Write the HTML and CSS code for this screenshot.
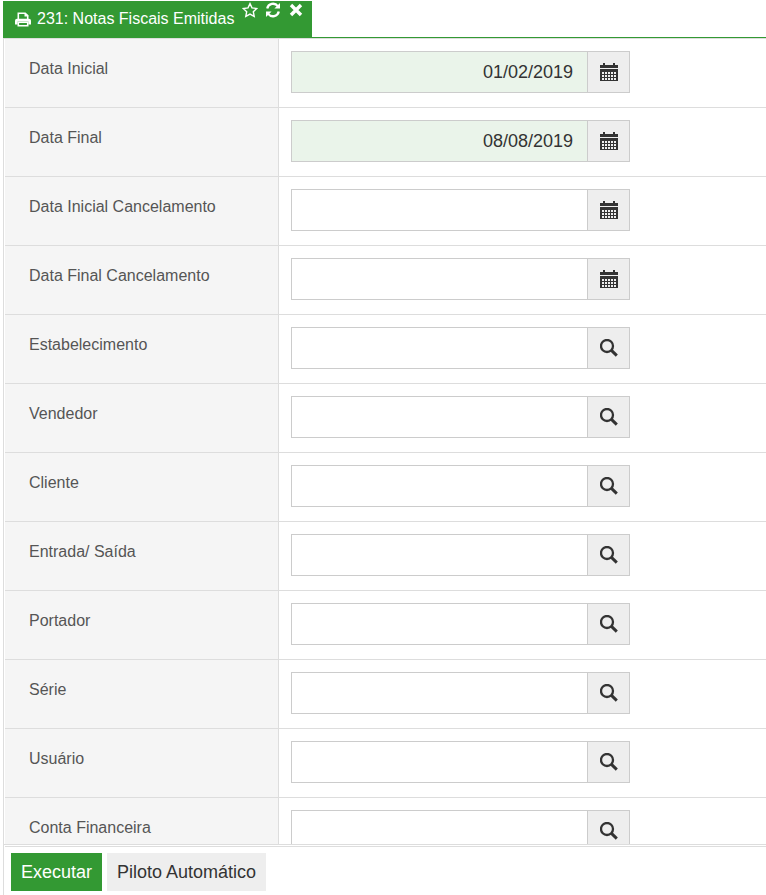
FILE: index.html
```html
<!DOCTYPE html>
<html lang="pt-BR">
<head>
    <meta charset="UTF-8">
    <meta name="viewport" content="width=device-width, initial-scale=1.0">
    <title>231: Notas Fiscais Emitidas</title>
    <link rel="stylesheet" href="styles.css">
</head>
<body>
    <!-- Icons shared by the fields -->
    <svg class="icon-defs" aria-hidden="true">
        <symbol id="icon-calendar" viewBox="0 0 18 19">
            <path fill="#333" d="M3 0h2v2h8V0h2v2h3v3H0V2h3z"/>
            <path fill="#333" d="M0 6h18v12H0z"/>
            <path stroke="#eee" stroke-width="2" stroke-dasharray="2 1" d="M2 10h14M2 13h14M2 16h14"/>
        </symbol>
        <symbol id="icon-search" viewBox="0 0 18 18">
            <circle cx="7" cy="7" r="6" fill="none" stroke="#333" stroke-width="2.3"/>
            <path fill="none" stroke="#333" stroke-width="3" d="M11.200 11.200l5.600 5.400"/>
        </symbol>
    </svg>

    <div class="tabs">
        <div class="tab">
            <svg class="icon-print" viewBox="0 0 16 15" aria-hidden="true">
                <path fill="none" stroke="#fff" stroke-width="1.6" d="M3.3 8V1.2h6.9l2.5 2.5V8M3.3 10.2h9.4v3.6H3.3z"/>
                <path fill="#fff" d="M9.5 1v3.6h3.7v-1zM2 6.8h12q2 0 2 2v3.8h-2.600v-3H2.600v3H0V8.800q0-2 2-2z"/>
            </svg>
            <h1>231: Notas Fiscais Emitidas</h1>
            <div class="tab-actions">
                <button type="button" aria-label="Favorito">
                    <svg width="16" height="16" viewBox="0 0 16 16">
                        <path fill="none" stroke="#fff" stroke-width="1.4" d="M8 1.600l2 4.300 4.800.6-3.500 3.200.9 4.700L8 12.100l-4.200 2.300.9-4.700L1.200 6.500 6 5.900z"/>
                    </svg>
                </button>
                <button type="button" aria-label="Atualizar">
                    <svg width="16" height="16" viewBox="0 0 16 16">
                        <path fill="none" stroke="#fff" stroke-width="2.300" d="M2.200 6.500a6 6 0 0 1 10.600-2.400M13.800 9.500a6 6 0 0 1-10.600 2.400"/>
                        <path fill="#fff" d="M15 1v5.600H9.400zM1 15V9.400h5.600z"/>
                    </svg>
                </button>
                <button type="button" aria-label="Fechar">
                    <svg width="16" height="16" viewBox="0 0 16 16">
                        <path stroke="#fff" stroke-width="3.400" d="M3 3l10 10M13 3L3 13"/>
                    </svg>
                </button>
            </div>
        </div>
    </div>

    <form class="panel">
        <div class="fields">
            <div class="row">
                <label for="data-inicial">Data Inicial</label>
                <div class="control">
                    <div class="input-group">
                        <input type="text" id="data-inicial" class="filled" value="01/02/2019">
                        <button type="button" aria-label="Abrir calendário"><svg class="calendar"><use href="#icon-calendar"/></svg></button>
                    </div>
                </div>
            </div>
            <div class="row">
                <label for="data-final">Data Final</label>
                <div class="control">
                    <div class="input-group">
                        <input type="text" id="data-final" class="filled" value="08/08/2019">
                        <button type="button" aria-label="Abrir calendário"><svg class="calendar"><use href="#icon-calendar"/></svg></button>
                    </div>
                </div>
            </div>
            <div class="row">
                <label for="data-inicial-canc">Data Inicial Cancelamento</label>
                <div class="control">
                    <div class="input-group">
                        <input type="text" id="data-inicial-canc">
                        <button type="button" aria-label="Abrir calendário"><svg class="calendar"><use href="#icon-calendar"/></svg></button>
                    </div>
                </div>
            </div>
            <div class="row">
                <label for="data-final-canc">Data Final Cancelamento</label>
                <div class="control">
                    <div class="input-group">
                        <input type="text" id="data-final-canc">
                        <button type="button" aria-label="Abrir calendário"><svg class="calendar"><use href="#icon-calendar"/></svg></button>
                    </div>
                </div>
            </div>
            <div class="row">
                <label for="estabelecimento">Estabelecimento</label>
                <div class="control">
                    <div class="input-group">
                        <input type="text" id="estabelecimento">
                        <button type="button" aria-label="Pesquisar"><svg class="search"><use href="#icon-search"/></svg></button>
                    </div>
                </div>
            </div>
            <div class="row">
                <label for="vendedor">Vendedor</label>
                <div class="control">
                    <div class="input-group">
                        <input type="text" id="vendedor">
                        <button type="button" aria-label="Pesquisar"><svg class="search"><use href="#icon-search"/></svg></button>
                    </div>
                </div>
            </div>
            <div class="row">
                <label for="cliente">Cliente</label>
                <div class="control">
                    <div class="input-group">
                        <input type="text" id="cliente">
                        <button type="button" aria-label="Pesquisar"><svg class="search"><use href="#icon-search"/></svg></button>
                    </div>
                </div>
            </div>
            <div class="row">
                <label for="entrada-saida">Entrada/ Saída</label>
                <div class="control">
                    <div class="input-group">
                        <input type="text" id="entrada-saida">
                        <button type="button" aria-label="Pesquisar"><svg class="search"><use href="#icon-search"/></svg></button>
                    </div>
                </div>
            </div>
            <div class="row">
                <label for="portador">Portador</label>
                <div class="control">
                    <div class="input-group">
                        <input type="text" id="portador">
                        <button type="button" aria-label="Pesquisar"><svg class="search"><use href="#icon-search"/></svg></button>
                    </div>
                </div>
            </div>
            <div class="row">
                <label for="serie">Série</label>
                <div class="control">
                    <div class="input-group">
                        <input type="text" id="serie">
                        <button type="button" aria-label="Pesquisar"><svg class="search"><use href="#icon-search"/></svg></button>
                    </div>
                </div>
            </div>
            <div class="row">
                <label for="usuario">Usuário</label>
                <div class="control">
                    <div class="input-group">
                        <input type="text" id="usuario">
                        <button type="button" aria-label="Pesquisar"><svg class="search"><use href="#icon-search"/></svg></button>
                    </div>
                </div>
            </div>
            <div class="row">
                <label for="conta-financeira">Conta Financeira</label>
                <div class="control">
                    <div class="input-group">
                        <input type="text" id="conta-financeira">
                        <button type="button" aria-label="Pesquisar"><svg class="search"><use href="#icon-search"/></svg></button>
                    </div>
                </div>
            </div>
        </div>

        <div class="actions">
            <button type="submit" class="btn btn-primary">Executar</button>
            <button type="button" class="btn">Piloto Automático</button>
        </div>
    </form>
</body>
</html>
```
FILE: styles.css
```css
* {
    box-sizing: border-box;
}

body {
    display: flex;
    flex-direction: column;
    height: 100vh;
    margin: 0;
    padding: 1px 0 0 3px;
    background: #fff;
    color: #555;
    font-family: "Liberation Sans", Arial, sans-serif;
    font-size: 16px;
}

button {
    padding: 0;
    border: none;
    border-radius: 0;
    font-family: inherit;
    cursor: pointer;
}

.icon-defs {
    position: absolute;
    width: 0;
    height: 0;
}

/* Tab bar */
.tabs {
    display: flex;
    flex: none;
    border-bottom: 1px solid #339933;
}

.tab {
    display: flex;
    align-items: center;
    height: 36px;
    padding: 0 8px 0 12px;
    background: #339933;
    color: #fff;
}

.icon-print {
    width: 16px;
    height: 15px;
    margin-right: 6px;
}

h1 {
    margin: 0;
    font-size: 16px;
    font-weight: normal;
    line-height: 36px;
}

.tab-actions {
    display: flex;
    align-self: flex-start;
    gap: 7px;
    margin-left: 8px;
    padding-top: 1px;
}

.tab-actions button {
    height: 16px;
    background: none;
}

.tab-actions svg {
    display: block;
}

/* Filter list */
.panel {
    display: flex;
    flex: 1;
    flex-direction: column;
    min-height: 0;
    margin: 0;
    border-top: 1px solid #ddd;
    border-left: 1px solid #ddd;
}

.fields {
    flex: 1;
    min-height: 0;
    overflow-y: auto;
    scrollbar-width: none;
    padding-left: 1px;
    border-bottom: 1px solid #ddd;
}

.row {
    display: flex;
    height: 69px;
    border-bottom: 1px solid #ddd;
}

.row label {
    flex: none;
    width: 274px;
    padding: 20px 12px 0 24px;
    border-right: 1px solid #ddd;
    background: #f5f5f5;
    line-height: 20px;
}

.control {
    flex: 1;
    padding: 12px;
}

.input-group {
    display: flex;
    max-width: 339px;
    height: 42px;
    border: 1px solid #ccc;
}

.input-group input {
    flex: 1;
    min-width: 0;
    padding: 0 14px;
    border: none;
    background: #fff;
    color: #333;
    font-family: inherit;
    font-size: 18px;
    text-align: right;
}

.input-group input.filled {
    background: #eaf4ea;
}

.input-group button {
    display: flex;
    align-items: center;
    justify-content: center;
    width: 42px;
    border-left: 1px solid #ccc;
    background: #eee;
}

.calendar {
    width: 18px;
    height: 19px;
}

.search {
    width: 18px;
    height: 18px;
}

/* Bottom buttons */
.actions {
    display: flex;
    flex: none;
    gap: 5px;
    margin: 1px 0 0 1px;
    padding: 6px 6px 4px;
    border-top: 1px solid #ddd;
}

.btn {
    height: 38px;
    padding: 0 10px;
    background: #eee;
    color: #333;
    font-size: 18px;
}

.btn-primary {
    background: #339933;
    color: #fff;
}
```
